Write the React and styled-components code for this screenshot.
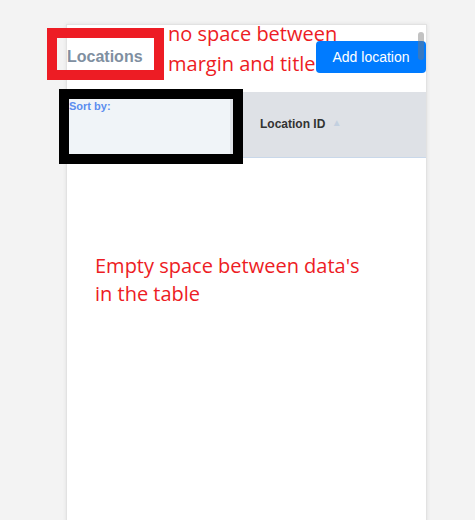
import React from "react";
import styled, { createGlobalStyle } from "styled-components";

const GlobalStyle = createGlobalStyle`
  html, body {
    margin: 0;
    padding: 0;
    background: #f3f3f3;
    font-family: "Liberation Sans", Arial, sans-serif;
  }
`;

function App() {
  return (
    <Page>
      <GlobalStyle />
      <Card>
        <CardHeader>
          <Title>Locations</Title>
          <AddButton>Add location</AddButton>
        </CardHeader>
        <Table>
          <thead>
            <tr>
              <SortCell>Sort by:</SortCell>
              <HeadCell>
                Location ID <SortArrow>▲</SortArrow>
              </HeadCell>
            </tr>
          </thead>
        </Table>
        <ScrollThumb />
      </Card>

      {/* Annotations drawn over the screenshot */}
      <RedBox />
      <Note top='19px' left='168px' size='20px' lineHeight='30px'>
        no space between
        <br />
        margin and title
      </Note>
      <BlackBox />
      <Note top='252px' left='95px' size='20px' lineHeight='28px'>
        Empty space between data's
        <br />
        in the table
      </Note>
    </Page>
  );
}

export default App;

// Styles

const Page = styled.div`
  position: relative;
  width: 475px;
  height: 520px;
  overflow: hidden;
  padding-top: 24px;
  box-sizing: border-box;
`;

const Card = styled.div`
  position: relative;
  margin-left: 66px;
  width: 361px;
  height: 520px;
  box-sizing: border-box;
  background: #fff;
  border: 1px solid #e2e2e2;
  box-shadow: 0 0 4px rgba(0, 0, 0, 0.08);
`;

const CardHeader = styled.div`
  height: 67px;
  display: flex;
  justify-content: space-between;
  align-items: flex-start;
`;

const Title = styled.h1`
  margin: 23px 0 0;
  font-size: 16px;
  line-height: 18px;
  font-weight: 700;
  color: #7f8fa1;
`;

const AddButton = styled.button`
  position: relative;
  z-index: 2;
  margin-top: 16px;
  width: 110px;
  height: 32px;
  padding: 0;
  border: 0;
  border-radius: 4px;
  background: #007bff;
  color: #fff;
  font-family: "Liberation Sans", Arial, sans-serif;
  font-size: 14px;
  cursor: pointer;
`;

const Table = styled.table`
  width: 100%;
  border-collapse: collapse;
`;

const SortCell = styled.th`
  width: 164px;
  height: 65px;
  padding: 8px 2px;
  vertical-align: top;
  text-align: left;
  background: #f0f4f8;
  border-right: 2px solid #dfe3e8;
  border-bottom: 1px solid #c9d8ea;
  color: #5b8def;
  font-size: 11px;
  font-weight: 700;
  box-sizing: border-box;
`;

const HeadCell = styled.th`
  padding: 0 0 0 28px;
  text-align: left;
  background: #dee1e6;
  border-bottom: 1px solid #c9d8ea;
  color: #333;
  font-size: 12px;
  font-weight: 700;
`;

const SortArrow = styled.span`
  margin-left: 3px;
  font-size: 10px;
  color: #c3d0e0;
  vertical-align: 2px;
`;

const ScrollThumb = styled.div`
  position: absolute;
  z-index: 3;
  top: 7px;
  right: 2px;
  width: 6px;
  height: 28px;
  border-radius: 3px;
  background: rgba(120, 120, 120, 0.45);
`;

const RedBox = styled.div`
  position: absolute;
  z-index: 1;
  top: 28px;
  left: 47px;
  width: 117px;
  height: 52px;
  box-sizing: border-box;
  border: 10px solid #ed1c24;
`;

const BlackBox = styled.div`
  position: absolute;
  z-index: 1;
  top: 89px;
  left: 59px;
  width: 184px;
  height: 75px;
  box-sizing: border-box;
  border: 10px solid #000;
`;

const Note = styled.div`
  position: absolute;
  z-index: 1;
  top: ${(props) => props.top};
  left: ${(props) => props.left};
  font-family: "Open Sans", "Noto Sans", sans-serif;
  font-size: ${(props) => props.size};
  line-height: ${(props) => props.lineHeight};
  color: #ed1c24;
  white-space: nowrap;
`;
